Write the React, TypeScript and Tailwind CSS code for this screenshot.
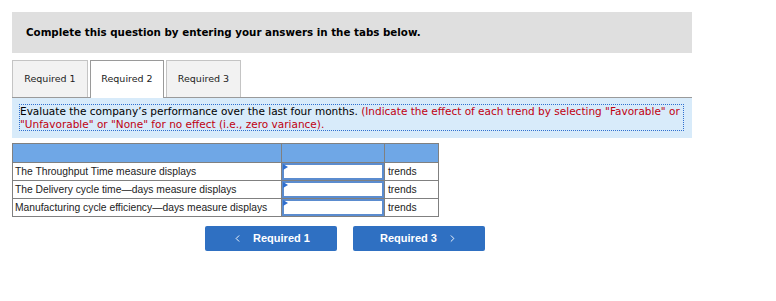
import { ChevronLeft, ChevronRight } from "lucide-react"

const rows = [
  "The Throughput Time measure displays",
  "The Delivery cycle time\u2014days measure displays",
  "Manufacturing cycle efficiency\u2014days measure displays",
]

const tabs = [
  { label: "Required 1", active: false, w: "w-[76px]" },
  { label: "Required 2", active: true, w: "w-[74px]" },
  { label: "Required 3", active: false, w: "w-[75px]" },
]

export default function App() {
  return (
    <div className="h-[301px] w-[776px] bg-white px-[12px] pt-[12px]">
      <div className="w-[680px]">
        <div className="flex h-[41px] items-center bg-[#dfdfdf] pl-[14px] font-['DejaVu_Sans',sans-serif] text-[10.3px] font-bold text-black">
          Complete this question by entering your answers in the tabs below.
        </div>

        <div className="mt-[7px] flex h-[37px] gap-[2px]">
          {tabs.map((t) => (
            <div
              key={t.label}
              className={`flex items-center justify-center border border-b-0 font-['DejaVu_Sans',sans-serif] text-[9.5px] text-[#222] ${t.w} ${
                t.active ? "relative z-10 -mb-px h-[38px] border-[#9a9a9a] bg-white" : "border-[#c4c4c4] bg-[#f2f2f2]"
              }`}
            >
              {t.label}
            </div>
          ))}
        </div>

        <div className="border-t border-[#9a9a9a] bg-[#d8ebfa] pb-[7px] pl-[7px] pr-[8px] pt-[6px]">
          <div className="border border-dotted border-[#2f6fcf] font-['DejaVu_Sans',sans-serif] text-[10.5px] leading-[12.5px] text-black">
            Evaluate the company&rsquo;s performance over the last four months.{" "}
            <span className="text-[#c00010]">
              (Indicate the effect of each trend by selecting "Favorable" or "Unfavorable" or "None" for no effect (i.e., zero variance).
            </span>
          </div>
        </div>

        <table className="mt-[5px] w-[426px] table-fixed border-collapse font-['Liberation_Sans',Arial,sans-serif] text-[10.3px] text-[#222]">
          <colgroup>
            <col className="w-[269px]" />
            <col className="w-[103px]" />
            <col className="w-[54px]" />
          </colgroup>
          <thead>
            <tr className="h-[19px] bg-[#6fa7e6]">
              <th className="border border-[#808080]"></th>
              <th className="border border-[#808080]"></th>
              <th className="border border-[#808080]"></th>
            </tr>
          </thead>
          <tbody>
            {rows.map((r) => (
              <tr key={r} className="h-[18px]">
                <td className="whitespace-nowrap border border-[#808080] px-[2px] py-0 text-left">{r}</td>
                <td className="border border-[#808080] p-0">
                  <div className="relative h-[17px] border-2 border-[#5b8ccf] bg-white">
                    <svg className="absolute left-[-1px] top-[-1px]" width="5" height="6" viewBox="0 0 5 6">
                      <path d="M0 0 L5 3 L0 6 Z" fill="#2f6fcf" />
                    </svg>
                  </div>
                </td>
                <td className="whitespace-nowrap border border-[#808080] px-[3px] py-0 text-left">trends</td>
              </tr>
            ))}
          </tbody>
        </table>

        <div className="ml-[193px] mt-[9px] flex gap-[16px] font-['Liberation_Sans',Arial,sans-serif] text-[11px] font-bold text-white">
          <div className="flex h-[25px] w-[132px] items-center justify-center gap-[10px] rounded-[2px] bg-[#2f70c2]">
            <ChevronLeft className="h-[11px] w-[11px]" strokeWidth={2} />
            <span>Required 1</span>
          </div>
          <div className="flex h-[25px] w-[132px] items-center justify-center gap-[10px] rounded-[2px] bg-[#2f70c2]">
            <span>Required 3</span>
            <ChevronRight className="h-[11px] w-[11px]" strokeWidth={2} />
          </div>
        </div>
      </div>
    </div>
  )
}
